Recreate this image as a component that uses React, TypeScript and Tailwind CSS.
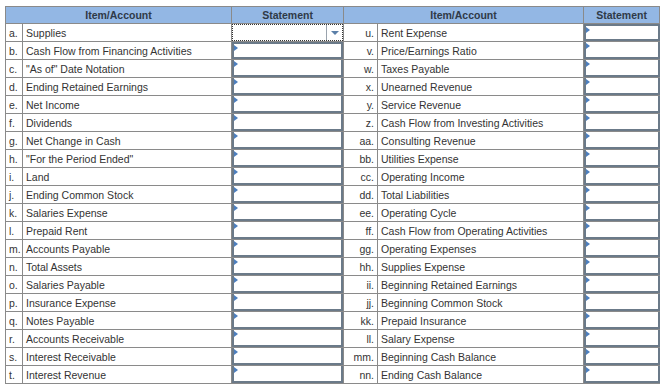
import React from 'react';

const left = [
  ['a.', 'Supplies'],
  ['b.', 'Cash Flow from Financing Activities'],
  ['c.', '"As of" Date Notation'],
  ['d.', 'Ending Retained Earnings'],
  ['e.', 'Net Income'],
  ['f.', 'Dividends'],
  ['g.', 'Net Change in Cash'],
  ['h.', '"For the Period Ended"'],
  ['i.', 'Land'],
  ['j.', 'Ending Common Stock'],
  ['k.', 'Salaries Expense'],
  ['l.', 'Prepaid Rent'],
  ['m.', 'Accounts Payable'],
  ['n.', 'Total Assets'],
  ['o.', 'Salaries Payable'],
  ['p.', 'Insurance Expense'],
  ['q.', 'Notes Payable'],
  ['r.', 'Accounts Receivable'],
  ['s.', 'Interest Receivable'],
  ['t.', 'Interest Revenue'],
];

const right = [
  ['u.', 'Rent Expense'],
  ['v.', 'Price/Earnings Ratio'],
  ['w.', 'Taxes Payable'],
  ['x.', 'Unearned Revenue'],
  ['y.', 'Service Revenue'],
  ['z.', 'Cash Flow from Investing Activities'],
  ['aa.', 'Consulting Revenue'],
  ['bb.', 'Utilities Expense'],
  ['cc.', 'Operating Income'],
  ['dd.', 'Total Liabilities'],
  ['ee.', 'Operating Cycle'],
  ['ff.', 'Cash Flow from Operating Activities'],
  ['gg.', 'Operating Expenses'],
  ['hh.', 'Supplies Expense'],
  ['ii.', 'Beginning Retained Earnings'],
  ['jj.', 'Beginning Common Stock'],
  ['kk.', 'Prepaid Insurance'],
  ['ll.', 'Salary Expense'],
  ['mm.', 'Beginning Cash Balance'],
  ['nn.', 'Ending Cash Balance'],
];

function InputCell({ first }: { first?: boolean }) {
  return (
    <td className="p-0 h-[17px] border-y border-[#8a8a8a]">
      <div
        className={`relative h-[17px] bg-white border-x-2 border-b-2 border-[#6b7a89] ${
          first ? 'border-t-2' : 'border-t-0'
        }`}
      >
        <span className="absolute left-0 top-[1px] w-0 h-0 border-y-[3px] border-y-transparent border-l-[4px] border-l-[#4d7fbe]" />
      </div>
    </td>
  );
}

function SelectCell() {
  return (
    <td className="p-0 h-[17px] border border-[#8a8a8a]">
      <div className="flex h-[17px] border border-dotted border-[#333] bg-white">
        <div className="flex-1" />
        <div className="w-[16px] border-l border-[#9aa3ad] flex items-center justify-center">
          <span className="w-0 h-0 border-x-[4px] border-x-transparent border-t-[4px] border-t-[#5b7fa8]" />
        </div>
      </div>
    </td>
  );
}

export default function App() {
  return (
    <div className="w-[665px] h-[391px] bg-white pl-[5px] pt-[6px] font-['Liberation_Sans',Arial,sans-serif] text-[10.5px] text-[#333]">
      <table className="border-collapse table-fixed w-[654px]">
        <colgroup>
          <col className="w-[17px]" />
          <col className="w-[209px]" />
          <col className="w-[112px]" />
          <col className="w-[34px]" />
          <col className="w-[206px]" />
          <col className="w-[76px]" />
        </colgroup>
        <thead>
          <tr className="bg-[#93b7e4] text-[#2f3a48]">
            <th colSpan={2} className="h-[17px] p-0 border border-[#8a8a8a] text-center font-bold leading-[16px]">Item/Account</th>
            <th className="h-[17px] p-0 border border-[#8a8a8a] text-center font-bold leading-[16px]">Statement</th>
            <th colSpan={2} className="h-[17px] p-0 border border-[#8a8a8a] text-center font-bold leading-[16px]">Item/Account</th>
            <th className="h-[17px] p-0 border border-[#8a8a8a] text-center font-bold leading-[16px]">Statement</th>
          </tr>
        </thead>
        <tbody>
          {left.map((l, i) => {
            const r = right[i];
            return (
              <tr key={l[0]}>
                <td className="h-[17px] p-0 border border-[#8a8a8a] pl-[3px] leading-[16px] whitespace-nowrap">{l[0]}</td>
                <td className="h-[17px] p-0 border border-[#8a8a8a] pl-[3px] leading-[16px] whitespace-nowrap">{l[1]}</td>
                {i === 0 ? <SelectCell /> : <InputCell first={i === 1} />}
                <td className="h-[17px] p-0 border border-[#8a8a8a] pr-[3px] text-right leading-[16px] whitespace-nowrap">{r[0]}</td>
                <td className="h-[17px] p-0 border border-[#8a8a8a] pl-[3px] leading-[16px] whitespace-nowrap">{r[1]}</td>
                <InputCell first={i === 0} />
              </tr>
            );
          })}
        </tbody>
      </table>
    </div>
  );
}
